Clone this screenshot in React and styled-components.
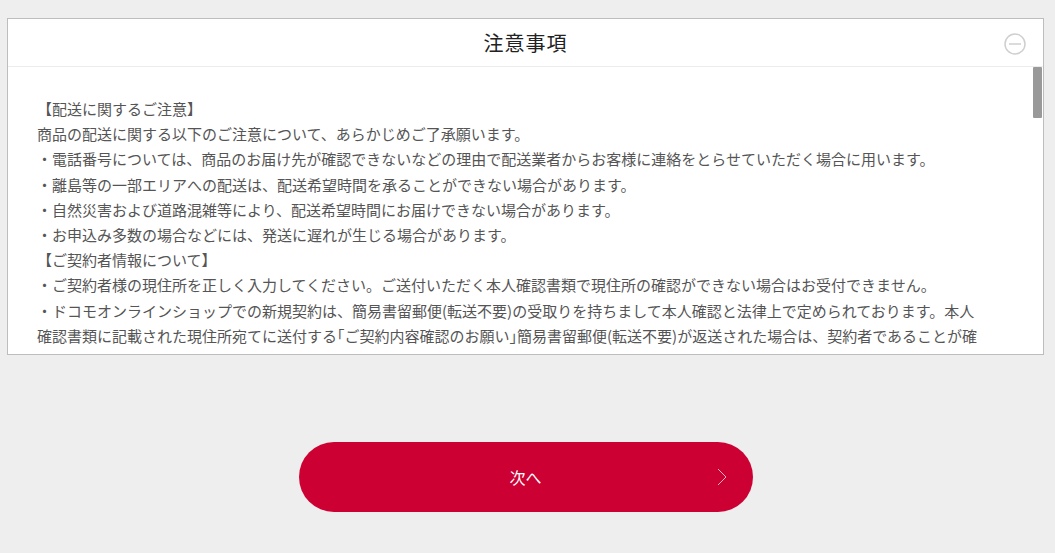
import React from "react";
import styled, { createGlobalStyle } from "styled-components";

const GlobalStyle = createGlobalStyle`
  html, body {
    margin: 0;
    padding: 0;
    background: #eeeeee;
    font-family: "Noto Sans CJK JP", "Noto Sans", sans-serif;
  }
`;

const Page = styled.div`
  padding: 18px 11px 0 7px;
  display: flex;
  flex-direction: column;
  align-items: center;
`;

const Panel = styled.section`
  width: 100%;
  box-sizing: border-box;
  background: #fff;
  border: 1px solid #bdbdbd;
`;

const Header = styled.div`
  position: relative;
  height: 47px;
  border-bottom: 1px solid #ececec;
  display: flex;
  align-items: center;
  justify-content: center;
`;

const Title = styled.h2`
  margin: 0;
  font-size: 20px;
  font-weight: normal;
  color: #222;
  letter-spacing: 1px;
`;

const Toggle = styled.button`
  position: absolute;
  right: 17px;
  top: 14px;
  width: 22px;
  height: 22px;
  padding: 0;
  border: none;
  background: none;
  cursor: pointer;
`;

const Body = styled.div`
  display: flex;
  height: 287px;
`;

const Scroll = styled.div`
  flex: 1;
  overflow: hidden;
  padding: 29px 50px 0 29px;
`;

const Track = styled.div`
  width: 9px;
  flex: none;
  padding-right: 1px;
  background: #fff;
`;

const Thumb = styled.div`
  height: 51px;
  background: #999;
  border-radius: 1px;
`;

const Line = styled.p`
  margin: 0;
  font-size: 15px;
  line-height: 25.2px;
  color: #555;
`;

const Quote = styled.span`
  font-feature-settings: "halt";
`;

const Next = styled.button`
  position: relative;
  margin-top: 87px;
  width: 454px;
  height: 70px;
  border: none;
  border-radius: 35px;
  background: #cc0033;
  color: #fff;
  font-family: inherit;
  font-size: 16px;
  cursor: pointer;
`;

const Chevron = styled.svg`
  position: absolute;
  right: 26px;
  top: 26px;
`;

const lines = [
  "【配送に関するご注意】",
  "商品の配送に関する以下のご注意について、あらかじめご了承願います。",
  "・電話番号については、商品のお届け先が確認できないなどの理由で配送業者からお客様に連絡をとらせていただく場合に用います。",
  "・離島等の一部エリアへの配送は、配送希望時間を承ることができない場合があります。",
  "・自然災害および道路混雑等により、配送希望時間にお届けできない場合があります。",
  "・お申込み多数の場合などには、発送に遅れが生じる場合があります。",
  "【ご契約者情報について】",
  "・ご契約者様の現住所を正しく入力してください。ご送付いただく本人確認書類で現住所の確認ができない場合はお受付できません。",
];

const App = () => (
  <>
    <GlobalStyle />
    <Page>
      <Panel>
        <Header>
          <Title>注意事項</Title>
          <Toggle aria-label="閉じる">
            <svg width="22" height="22" viewBox="0 0 22 22">
              <circle cx="11" cy="11" r="10" fill="none" stroke="#cfcfcf" strokeWidth="1.5" />
              <line x1="5" y1="11" x2="17" y2="11" stroke="#cfcfcf" strokeWidth="1.5" />
            </svg>
          </Toggle>
        </Header>
        <Body>
          <Scroll>
            {lines.map((t, i) => (
              <Line key={i}>{t}</Line>
            ))}
            <Line>
              ・ドコモオンラインショップでの新規契約は、簡易書留郵便(転送不要)の受取りを持ちまして本人確認と法律上で定められております。本人確認書類に記載された現住所宛てに送付する
              <Quote>「ご契約内容確認のお願い」</Quote>
              簡易書留郵便(転送不要)が返送された場合は、契約者であることが確認できないため、ご利用を停止させていただきます。
            </Line>
            <Line>・ご契約者様ご本人以外の方のお名前・住所でのお申込みはお受けできません。</Line>
          </Scroll>
          <Track>
            <Thumb />
          </Track>
        </Body>
      </Panel>
      <Next>
        次へ
        <Chevron width="10" height="18" viewBox="0 0 10 18">
          <polyline points="1,1 9,9 1,17" fill="none" stroke="rgba(255,255,255,0.7)" strokeWidth="1" />
        </Chevron>
      </Next>
    </Page>
  </>
);

export default App;
